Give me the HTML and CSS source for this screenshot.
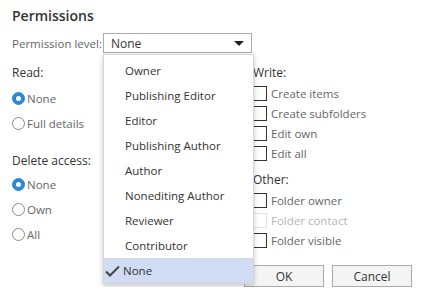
FILE: index.html
```html
<!DOCTYPE html>
<html>
<head>
    <title>Permissions</title>
    <link rel="stylesheet" href="styles.css">
</head>
<body>
    <div class="panel">
        <h1>Permissions</h1>

        <div class="level-row">
            <span class="level-label">Permission level:</span>
            <div class="select-wrap">
                <div class="select">
                    <span>None</span>
                    <span class="caret"></span>
                </div>
                <ul class="menu">
                    <li>Owner</li>
                    <li>Publishing Editor</li>
                    <li>Editor</li>
                    <li>Publishing Author</li>
                    <li>Author</li>
                    <li>Nonediting Author</li>
                    <li>Reviewer</li>
                    <li>Contributor</li>
                    <li class="selected">
                        <svg class="tick" width="15" height="12" viewBox="0 0 15 12">
                            <path d="M1 6.5 L5 10.5 L14 1.5" fill="none" stroke="#444" stroke-width="2"/>
                        </svg>None
                    </li>
                </ul>
            </div>
        </div>

        <div class="columns">
            <div class="col-left">
                <div class="group-title">Read:</div>
                <div class="radio-row first"><span class="radio checked"></span>None</div>
                <div class="radio-row"><span class="radio"></span>Full details</div>

                <div class="group-title delete-title">Delete access:</div>
                <div class="radio-row second"><span class="radio checked"></span>None</div>
                <div class="radio-row"><span class="radio"></span>Own</div>
                <div class="radio-row"><span class="radio"></span>All</div>
            </div>

            <div class="col-right">
                <div class="group-title">Write:</div>
                <div class="check-row"><span class="box"></span>Create items</div>
                <div class="check-row"><span class="box"></span>Create subfolders</div>
                <div class="check-row"><span class="box"></span>Edit own</div>
                <div class="check-row"><span class="box"></span>Edit all</div>

                <div class="group-title other-title">Other:</div>
                <div class="check-row"><span class="box"></span>Folder owner</div>
                <div class="check-row disabled"><span class="box"></span>Folder contact</div>
                <div class="check-row"><span class="box"></span>Folder visible</div>

                <div class="buttons">
                    <button>OK</button>
                    <button>Cancel</button>
                </div>
            </div>
        </div>
    </div>
</body>
</html>
```

FILE: styles.css
```css
body {
    margin: 0;
    background: white;
    font-family: "Open Sans", "Noto Sans", sans-serif;
    font-size: 11.5px;
    color: #444;
}

.panel {
    padding: 6px 12px 0 12px;
}

h1 {
    font-size: 14px;
    font-weight: 600;
    color: #333;
    margin: 0;
    line-height: 20px;
}

.level-row {
    display: flex;
    align-items: center;
    margin-top: 7px;
}

.level-label {
    color: #666;
    width: 91px;
    white-space: nowrap;
}

.select-wrap {
    position: relative;
}

.select {
    width: 133px;
    height: 18px;
    border: 1px solid #ababab;
    display: flex;
    align-items: center;
    justify-content: space-between;
    padding: 0 7px 0 7px;
    color: #333;
    font-size: 12px;
}

.caret {
    width: 0;
    height: 0;
    border-left: 5px solid transparent;
    border-right: 5px solid transparent;
    border-top: 5px solid #222;
}

.menu {
    position: absolute;
    top: 21px;
    left: 0;
    width: 149px;
    margin: 0;
    padding: 3px 0 0 0;
    list-style: none;
    background: white;
    border: 1px solid #d6d6d6;
    box-shadow: 0 2px 5px rgba(0, 0, 0, 0.22);
    z-index: 2;
}

.menu li {
    height: 25px;
    line-height: 25px;
    padding-left: 21px;
    color: #333;
}

.menu li.selected {
    display: flex;
    align-items: center;
    background: #cfdcf4;
    padding-left: 1px;
}

.tick {
    margin-right: 3px;
}

.columns {
    display: flex;
    margin-top: 10px;
}

.col-left {
    width: 241px;
}

.col-right {
    flex: 1;
}

.group-title {
    color: #333;
    font-size: 12px;
    line-height: 20px;
    height: 20px;
}

.radio-row {
    display: flex;
    align-items: center;
    height: 25px;
    color: #666;
}

.radio-row.first {
    margin-top: 3px;
}

.radio-row.second {
    margin-top: 1px;
}

.radio {
    width: 11px;
    height: 11px;
    border: 1px solid #8a8a8a;
    border-radius: 50%;
    margin-right: 2px;
    box-sizing: content-box;
    position: relative;
}

.radio.checked {
    background: #2b88d8;
    border-color: #2b88d8;
}

.radio.checked::after {
    content: "";
    position: absolute;
    left: 3px;
    top: 3px;
    width: 5px;
    height: 5px;
    border-radius: 50%;
    background: white;
}

.delete-title {
    margin-top: 15px;
}

.check-row {
    display: flex;
    align-items: center;
    height: 20px;
    color: #666;
}

.box {
    width: 14px;
    height: 15px;
    border: 1px solid #333;
    margin-right: 4px;
    box-sizing: border-box;
}

.check-row.disabled {
    color: #b5b5b5;
}

.check-row.disabled .box {
    border-color: #e3e3e3;
}

.other-title {
    margin-top: 7px;
}

.buttons {
    display: flex;
    gap: 8px;
    margin-top: 15px;
    margin-left: -9px;
}

button {
    width: 80px;
    height: 22px;
    background: #f4f4f4;
    border: 1px solid #ababab;
    color: #333;
    font-family: "Open Sans", "Noto Sans", sans-serif;
    font-size: 12px;
    padding: 0;
}
```
